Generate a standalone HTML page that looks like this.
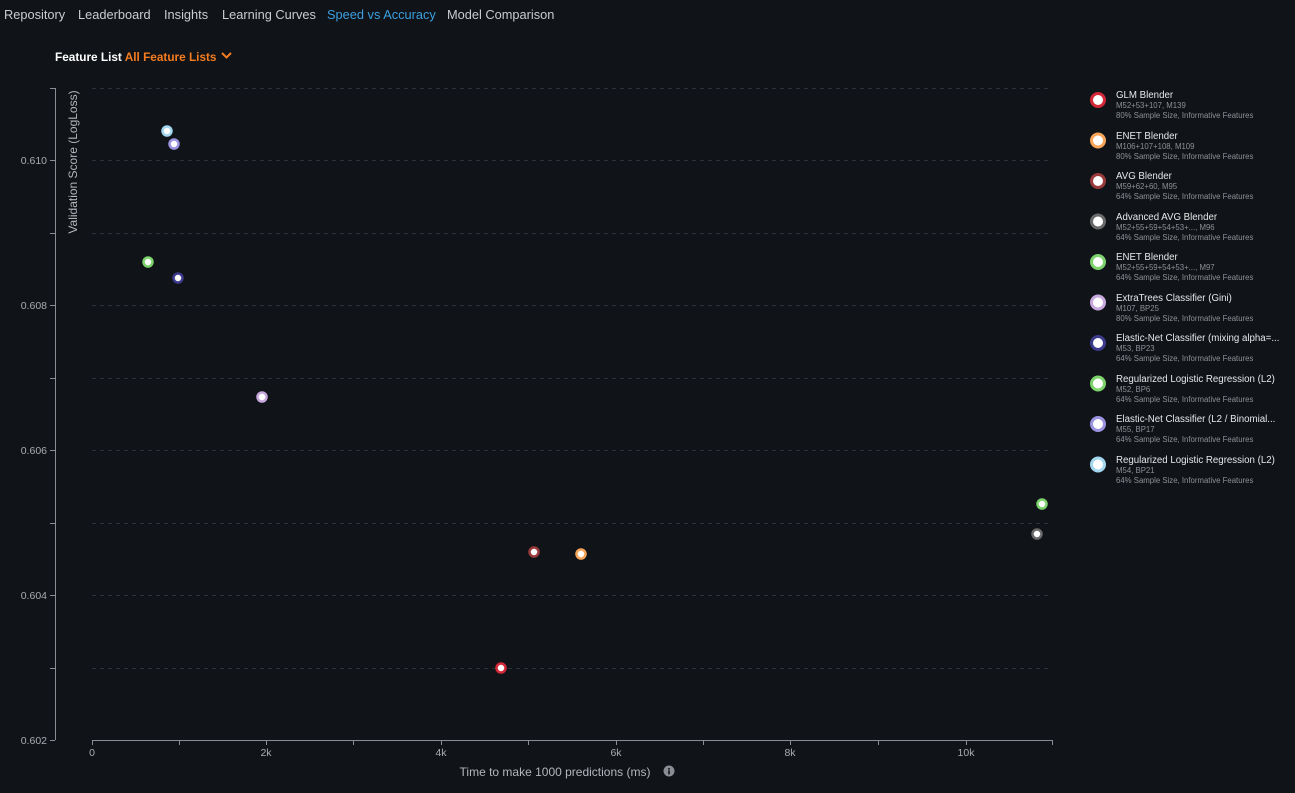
<!DOCTYPE html>
<html><head><meta charset="utf-8"><style>
html,body{margin:0;padding:0;background:#101317;width:1295px;height:793px;overflow:hidden;font-family:"Liberation Sans",sans-serif}
svg{display:block}
</style></head><body>
<svg width="1295" height="793" xmlns="http://www.w3.org/2000/svg" font-family="Liberation Sans, sans-serif">
<rect width="1295" height="793" fill="#101317"/>
<g font-size="12.8" fill="#c9ccd1">
<text x="4" y="19">Repository</text>
<text x="78" y="19">Leaderboard</text>
<text x="164" y="19">Insights</text>
<text x="222" y="19">Learning Curves</text>
<text x="327" y="19" fill="#3c9fe0">Speed vs Accuracy</text>
<text x="447" y="19">Model Comparison</text>
</g>
<text x="55" y="61" font-size="11.8" font-weight="bold" fill="#fff">Feature List <tspan fill="#f57c1f">All Feature Lists</tspan></text>
<path d="M222 53 l4.5 4.5 l4.5 -4.5" stroke="#f57c1f" stroke-width="2" fill="none"/>
<g stroke="#2e3238" stroke-width="1" stroke-dasharray="4,4">
<line x1="92" x2="1052" y1="88.5" y2="88.5"/>
<line x1="92" x2="1052" y1="160.5" y2="160.5"/>
<line x1="92" x2="1052" y1="233.5" y2="233.5"/>
<line x1="92" x2="1052" y1="305.5" y2="305.5"/>
<line x1="92" x2="1052" y1="378.5" y2="378.5"/>
<line x1="92" x2="1052" y1="450.5" y2="450.5"/>
<line x1="92" x2="1052" y1="523.5" y2="523.5"/>
<line x1="92" x2="1052" y1="595.5" y2="595.5"/>
<line x1="92" x2="1052" y1="668.5" y2="668.5"/>
</g>
<g stroke="#8a8e94" stroke-width="1">
<line x1="55.5" x2="55.5" y1="88" y2="740"/>
<line x1="50" x2="55" y1="88.5" y2="88.5"/>
<line x1="50" x2="55" y1="160.5" y2="160.5"/>
<line x1="50" x2="55" y1="233.5" y2="233.5"/>
<line x1="50" x2="55" y1="305.5" y2="305.5"/>
<line x1="50" x2="55" y1="378.5" y2="378.5"/>
<line x1="50" x2="55" y1="450.5" y2="450.5"/>
<line x1="50" x2="55" y1="523.5" y2="523.5"/>
<line x1="50" x2="55" y1="595.5" y2="595.5"/>
<line x1="50" x2="55" y1="668.5" y2="668.5"/>
<line x1="50" x2="55" y1="740.5" y2="740.5"/>
<line x1="92" x2="1053" y1="740.5" y2="740.5"/>
<line x1="92.5" x2="92.5" y1="740" y2="745"/>
<line x1="179.5" x2="179.5" y1="740" y2="745"/>
<line x1="266.5" x2="266.5" y1="740" y2="745"/>
<line x1="353.5" x2="353.5" y1="740" y2="745"/>
<line x1="441.5" x2="441.5" y1="740" y2="745"/>
<line x1="528.5" x2="528.5" y1="740" y2="745"/>
<line x1="616.5" x2="616.5" y1="740" y2="745"/>
<line x1="703.5" x2="703.5" y1="740" y2="745"/>
<line x1="790.5" x2="790.5" y1="740" y2="745"/>
<line x1="878.5" x2="878.5" y1="740" y2="745"/>
<line x1="966.5" x2="966.5" y1="740" y2="745"/>
<line x1="1052.5" x2="1052.5" y1="740" y2="745"/>
</g>
<g font-size="10.5" fill="#a9adb2" text-anchor="end">
<text x="47" y="164">0.610</text>
<text x="47" y="309">0.608</text>
<text x="47" y="454">0.606</text>
<text x="47" y="599">0.604</text>
<text x="47" y="744">0.602</text>
</g>
<g font-size="10.5" fill="#a9adb2" text-anchor="middle">
<text x="92" y="756">0</text>
<text x="266" y="756">2k</text>
<text x="441" y="756">4k</text>
<text x="616" y="756">6k</text>
<text x="790" y="756">8k</text>
<text x="966" y="756">10k</text>
</g>
<text x="555" y="776" font-size="12" fill="#b3b7bc" text-anchor="middle">Time to make 1000 predictions (ms)</text>
<circle cx="669" cy="771" r="5.5" fill="#8a8e94"/>
<rect x="668.2" y="768" width="1.6" height="1.6" fill="#101317"/>
<rect x="668.2" y="770.3" width="1.6" height="4" fill="#101317"/>
<text transform="translate(77,162) rotate(-90)" font-size="12" fill="#b3b7bc" text-anchor="middle">Validation Score (LogLoss)</text>
<g stroke-width="2.5" fill="#fff">
<circle cx="167" cy="131" r="4.5" stroke="#a3d6ef"/>
<circle cx="174" cy="144" r="4.5" stroke="#9c93e0"/>
<circle cx="148" cy="262" r="4.5" stroke="#7cd36c"/>
<circle cx="178" cy="278" r="4.5" stroke="#3c3a8a"/>
<circle cx="262" cy="397" r="4.5" stroke="#c8a9dd"/>
<circle cx="534" cy="552" r="4.5" stroke="#9a3a3c"/>
<circle cx="581" cy="554" r="4.5" stroke="#f7a659"/>
<circle cx="501" cy="668" r="4.5" stroke="#d42838"/>
<circle cx="1042" cy="504" r="4.5" stroke="#7cd36c"/>
<circle cx="1037" cy="534" r="4.5" stroke="#6a6a6a"/>
</g>
<g stroke-width="3" fill="#fff">
<circle cx="1098" cy="100" r="6.5" stroke="#d42838"/>
<circle cx="1098" cy="140.5" r="6.5" stroke="#f7a659"/>
<circle cx="1098" cy="181" r="6.5" stroke="#9a3a3c"/>
<circle cx="1098" cy="221.5" r="6.5" stroke="#6a6a6a"/>
<circle cx="1098" cy="262" r="6.5" stroke="#7cd36c"/>
<circle cx="1098" cy="302.5" r="6.5" stroke="#c8a9dd"/>
<circle cx="1098" cy="343" r="6.5" stroke="#3c3a8a"/>
<circle cx="1098" cy="383.5" r="6.5" stroke="#7cd36c"/>
<circle cx="1098" cy="424" r="6.5" stroke="#9c93e0"/>
<circle cx="1098" cy="464.5" r="6.5" stroke="#a3d6ef"/>
</g>
<g font-size="9.7" fill="#e6e8ea">
<text x="1116" y="98">GLM Blender</text>
<text x="1116" y="139">ENET Blender</text>
<text x="1116" y="179">AVG Blender</text>
<text x="1116" y="220">Advanced AVG Blender</text>
<text x="1116" y="260">ENET Blender</text>
<text x="1116" y="301">ExtraTrees Classifier (Gini)</text>
<text x="1116" y="341">Elastic-Net Classifier (mixing alpha=...</text>
<text x="1116" y="382">Regularized Logistic Regression (L2)</text>
<text x="1116" y="422">Elastic-Net Classifier (L2 / Binomial...</text>
<text x="1116" y="463">Regularized Logistic Regression (L2)</text>
</g>
<g font-size="7.8" fill="#8d9196">
<text x="1116" y="108">M52+53+107, M139</text><text x="1116" y="118">80% Sample Size, Informative Features</text>
<text x="1116" y="149">M106+107+108, M109</text><text x="1116" y="159">80% Sample Size, Informative Features</text>
<text x="1116" y="189">M59+62+60, M95</text><text x="1116" y="199">64% Sample Size, Informative Features</text>
<text x="1116" y="230">M52+55+59+54+53+..., M96</text><text x="1116" y="240">64% Sample Size, Informative Features</text>
<text x="1116" y="270">M52+55+59+54+53+..., M97</text><text x="1116" y="280">64% Sample Size, Informative Features</text>
<text x="1116" y="311">M107, BP25</text><text x="1116" y="321">80% Sample Size, Informative Features</text>
<text x="1116" y="351">M53, BP23</text><text x="1116" y="361">64% Sample Size, Informative Features</text>
<text x="1116" y="392">M52, BP6</text><text x="1116" y="402">64% Sample Size, Informative Features</text>
<text x="1116" y="432">M55, BP17</text><text x="1116" y="442">64% Sample Size, Informative Features</text>
<text x="1116" y="473">M54, BP21</text><text x="1116" y="483">64% Sample Size, Informative Features</text>
</g>
</svg>
</body></html>
